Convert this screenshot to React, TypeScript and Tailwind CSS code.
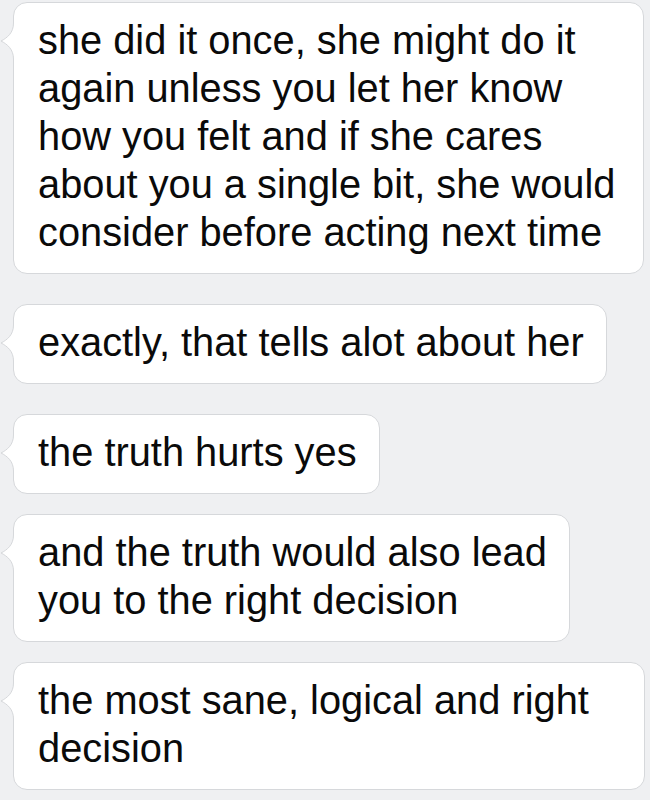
const messages: { lines: string[]; width?: string; gap: string }[] = [
  {
    lines: [
      "she did it once, she might do it",
      "again unless you let her know",
      "how you felt and if she cares",
      "about you a single bit, she would",
      "consider before acting next time",
    ],
    width: "w-[631px]",
    gap: "mb-[30px]",
  },
  { lines: ["exactly, that tells alot about her"], gap: "mb-[30px]" },
  { lines: ["the truth hurts yes"], gap: "mb-[20px]" },
  {
    lines: ["and the truth would also lead", "you to the right decision"],
    gap: "mb-[20px]",
  },
  {
    lines: ["the most sane, logical and right", "decision"],
    width: "w-[632px]",
    gap: "",
  },
];

const Tail = () => (
  <svg
    className="absolute left-[-14px] top-[20px]"
    width="16"
    height="36"
    viewBox="0 0 16 36"
  >
    <path d="M13.5 0 C13.5 10 7 15 1 18 C7 21 13.5 26 13.5 36 L16 36 L16 0 Z" fill="#ffffff" />
    <path d="M13.5 0 C13.5 10 7 15 1 18 C7 21 13.5 26 13.5 36" fill="none" stroke="#d6d8db" strokeWidth="1" />
  </svg>
);

const Bubble = ({ lines, width, gap }: { lines: string[]; width?: string; gap: string }) => (
  <div
    className={`relative ml-[13px] ${width ?? "w-fit"} ${gap} rounded-[14px] border border-[#d6d8db] bg-white pl-[24px] pr-[22px] pt-[13px] pb-[17px]`}
  >
    <Tail />
    <p className="whitespace-nowrap text-[39.8px] leading-[48px] text-[#0a0a0a]">
      {lines.map((l, i) => (
        <span key={i} className="block">
          {l}
        </span>
      ))}
    </p>
  </div>
);

export default function App() {
  return (
    <div className="min-h-screen w-[650px] bg-[#eff0f2] pt-[2px] font-['Liberation_Sans',Arial,sans-serif]">
      {messages.map((m, i) => (
        <Bubble key={i} {...m} />
      ))}
    </div>
  );
}
